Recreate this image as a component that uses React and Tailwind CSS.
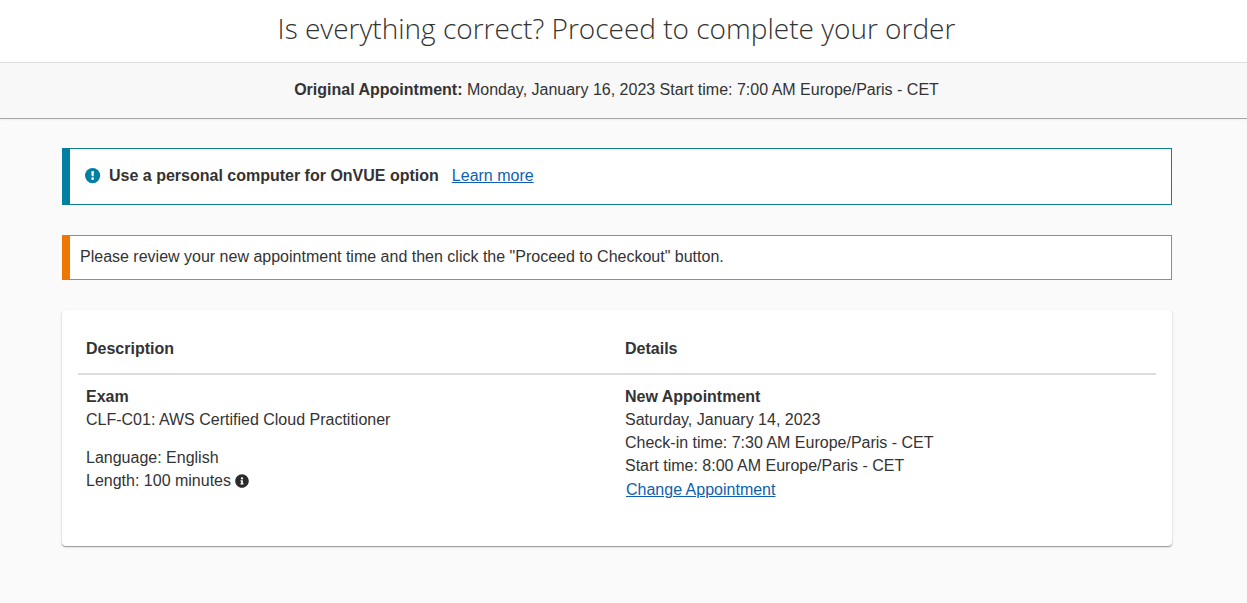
function AlertIcon() {
  return (
    <svg viewBox="0 0 16 16" className="h-4 w-4 shrink-0" aria-hidden="true">
      <circle cx="7.6" cy="7.6" r="7.6" fill="#007fa3" />
      <path d="M6.3 3.2h2.7l-.4 5.1H6.700z" fill="#fff" />
      <circle cx="7.65" cy="10.7" r="1.4" fill="#fff" />
    </svg>
  );
}

function InfoIcon() {
  return (
    <svg viewBox="0 0 512 512" className="h-3.5 w-3.5" aria-hidden="true">
      <path
        fill="#2b2b2b"
        d="M256 8C119 8 8 119 8 256s111 248 248 248 248-111 248-248S393 8 256 8zm0 110a42 42 0 1 1 0 84 42 42 0 0 1 0-84zm56 254c0 6.600-5.400 12-12 12h-88c-6.600 0-12-5.400-12-12v-24c0-6.600 5.400-12 12-12h12v-64h-12c-6.600 0-12-5.400-12-12v-24c0-6.600 5.400-12 12-12h64c6.600 0 12 5.400 12 12v100h12c6.600 0 12 5.400 12 12v24z"
      />
    </svg>
  );
}

function TextLink({ href, children }) {
  return (
    <a href={href} className="inline-block px-px text-[#0f5fb0] underline">
      {children}
    </a>
  );
}

export default function App() {
  return (
    <div className="min-h-screen bg-[#fafafa] font-['Liberation_Sans',Arial,sans-serif] text-base leading-[23px] text-[#333]">
      <header className="border-b border-[#ddd] bg-white pt-2 pr-3.5 pb-3.5">
        <h1 className="text-center font-['Open_Sans',sans-serif] text-[28px] leading-10 font-light">
          Is everything correct? Proceed to complete your order
        </h1>
      </header>
      <div className="border-b border-[#a3a6a3] bg-[#f8f8f8] pt-[15px] pr-3.5 pb-[17px] text-center shadow-xs">
        <strong>Original Appointment:</strong> Monday, January 16, 2023 Start time: 7:00 AM Europe/Paris - CET
      </div>
      <main className="flex flex-col gap-[30px] pt-[29px] pr-[75px] pb-14 pl-[62px]">
        <section className="flex items-center gap-2 border border-l-8 border-[#0f7f98] border-l-[#007fa3] bg-white pt-[15px] pb-[17px] pl-[15px]">
          <AlertIcon />
          <strong className="mr-1">Use a personal computer for OnVUE option</strong>
          <TextLink href="#learn-more">Learn more</TextLink>
        </section>
        <section className="border border-l-8 border-[#c98324] border-l-[#ed7700] bg-white pt-[9px] pb-[11px] pl-2.5">
          Please review your new appointment time and then click the "Proceed to Checkout" button.
        </section>
        <section className="rounded bg-white px-4 pt-4 pb-[34px] shadow-[0_1px_1px_#999,0_1px_3px_#0000001f]">
          <table className="w-full table-fixed text-left">
            <thead>
              <tr className="border-b-2 border-[#ddd]">
                <th className="px-2 pt-[11px] pb-[13px]">Description</th>
                <th className="px-2 pt-[11px] pb-[13px]">Details</th>
              </tr>
            </thead>
            <tbody>
              <tr className="align-top">
                <td className="px-2 py-2.5">
                  <p className="font-bold">Exam</p>
                  <p>CLF-C01: AWS Certified Cloud Practitioner</p>
                  <p className="mt-[15px]">Language: English</p>
                  <p className="flex items-center gap-1">
                    Length: 100 minutes
                    <button type="button" aria-label="Length information">
                      <InfoIcon />
                    </button>
                  </p>
                </td>
                <td className="px-2 py-2.5">
                  <p className="font-bold">New Appointment</p>
                  <p>Saturday, January 14, 2023</p>
                  <p>Check-in time: 7:30 AM Europe/Paris - CET</p>
                  <p>Start time: 8:00 AM Europe/Paris - CET</p>
                  <p className="py-px">
                    <TextLink href="#change-appointment">Change Appointment</TextLink>
                  </p>
                </td>
              </tr>
            </tbody>
          </table>
        </section>
      </main>
    </div>
  );
}
